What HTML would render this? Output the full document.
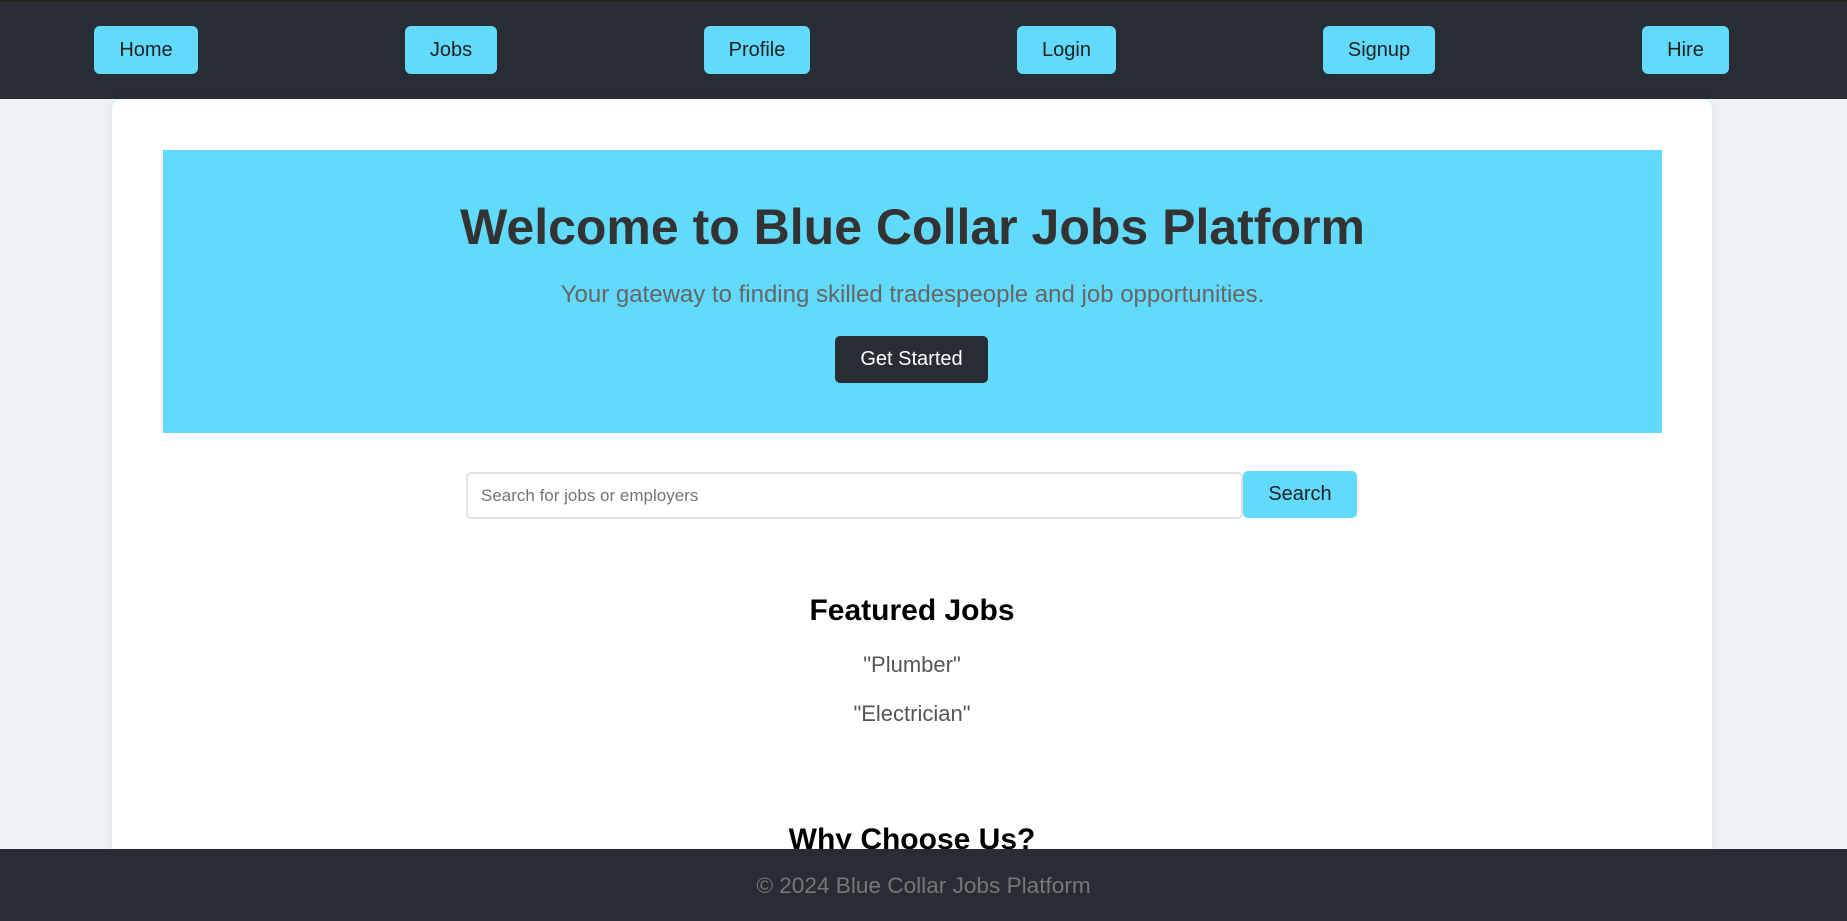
<!DOCTYPE html>
<html><head><meta charset="utf-8"><style>
*{box-sizing:border-box;margin:0;padding:0}
html,body{width:1847px;height:921px;overflow:hidden}
body{background:#eef2f7;font-family:"Liberation Sans",Arial,sans-serif;position:relative}
nav{position:absolute;top:0;left:0;width:1847px;height:99px;background:#282c35;border-top:2px solid #222}
nav a{position:absolute;top:24px;height:48px;background:#61dafb;color:#222;border-radius:6px;font-size:20px;line-height:48px;text-align:center;text-decoration:none}
.card{position:absolute;left:112px;top:99px;width:1600px;height:830px;background:#fff;border-radius:10px;box-shadow:0 2px 12px rgba(0,0,0,.08)}
.hero{position:absolute;left:51px;top:51px;width:1499px;height:283px;background:#61dafb;text-align:center}
.hero h1{position:absolute;left:0;right:0;top:49px;font-size:50px;font-weight:bold;color:#333;line-height:56px}
.hero p{position:absolute;left:0;right:0;top:131px;font-size:24px;color:#666;line-height:28px}
.hero .btn{position:absolute;left:672px;top:186px;width:153px;height:47px;background:#282c35;color:#fff;border-radius:5px;font-size:20px;line-height:47px}
.input{position:absolute;left:354px;top:373px;width:777px;height:47px;border:2px solid #e2e2e2;border-radius:5px;font-size:17px;color:#757575;line-height:43px;padding-left:13px}
.sbtn{position:absolute;left:1131px;top:372px;width:114px;height:47px;background:#61dafb;border-radius:5px;font-size:20px;color:#222;line-height:47px;text-align:center}
.c{position:absolute;left:0;width:1600px;text-align:center}
h2{font-size:30px;font-weight:bold;color:#000}
.j{font-size:22px;color:#555}
footer{position:absolute;left:0;top:849px;width:1847px;height:72px;background:#282c35;color:#777;font-size:22.6px;text-align:center;line-height:74px}
</style></head><body>
<nav>
<a style="left:94px;width:104px">Home</a>
<a style="left:405px;width:92px">Jobs</a>
<a style="left:704px;width:106px">Profile</a>
<a style="left:1017px;width:99px">Login</a>
<a style="left:1323px;width:112px">Signup</a>
<a style="left:1642px;width:87px">Hire</a>
</nav>
<div class="card">
<div class="hero">
<h1>Welcome to Blue Collar Jobs Platform</h1>
<p>Your gateway to finding skilled tradespeople and job opportunities.</p>
<div class="btn">Get Started</div>
</div>
<div class="input">Search for jobs or employers</div>
<div class="sbtn">Search</div>
<h2 class="c" style="top:495px">Featured Jobs</h2>
<div class="c j" style="top:553px">"Plumber"</div>
<div class="c j" style="top:602px">"Electrician"</div>
<h2 class="c" style="top:724px">Why Choose Us?</h2>
</div>
<footer>© 2024 Blue Collar Jobs Platform</footer>
</body></html>
